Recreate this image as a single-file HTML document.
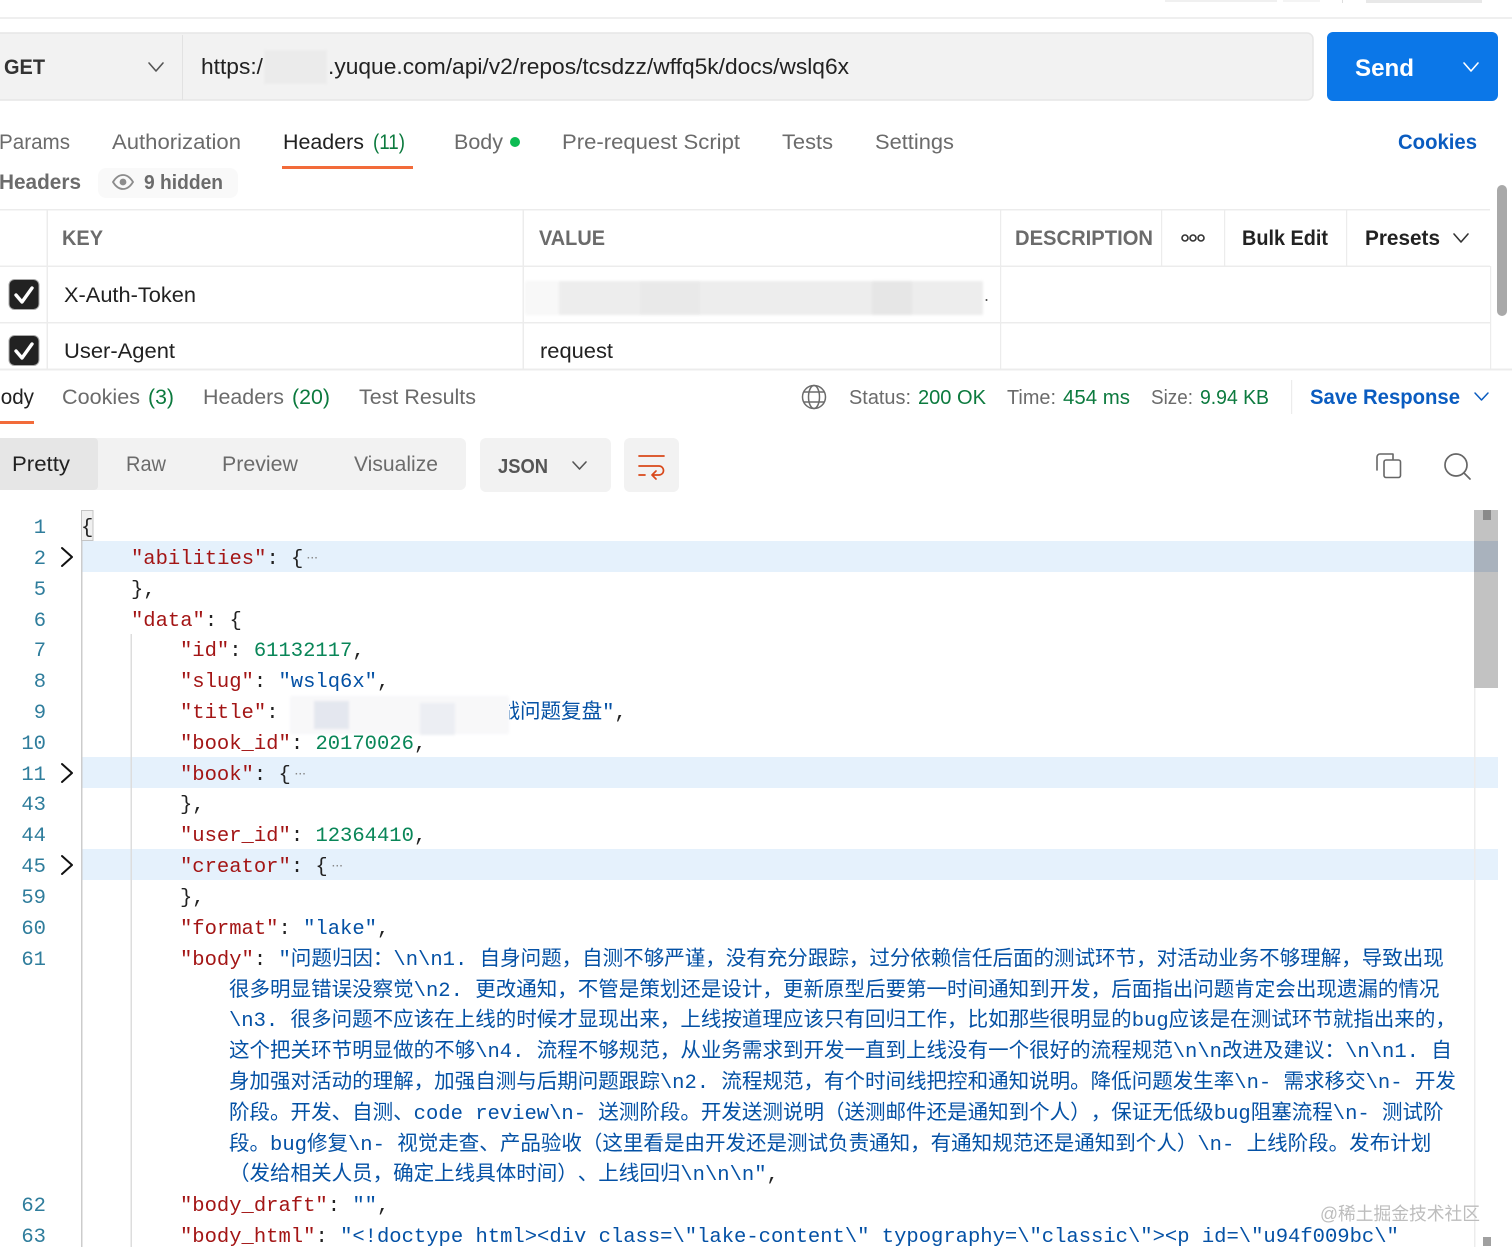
<!DOCTYPE html>
<html lang="zh"><head><meta charset="utf-8"><title>Postman</title>
<style>
html,body{margin:0;padding:0;background:#fff;width:1512px;height:1255px;overflow:hidden}
svg{display:block;position:absolute;left:0;top:0;filter:blur(.3px)}
.u{font-family:"Liberation Sans","Noto Sans CJK SC",sans-serif;font-size:21px;fill:#6b6b6b}
.b{font-weight:700}
.d{fill:#212121}
.g{fill:#0c7a3e}
.l{fill:#0a5cc0}
.m{font-family:"Liberation Mono","Noto Sans CJK SC",monospace;font-size:20.53px;fill:#222;white-space:pre;text-spacing-trim:space-all}
.n{fill:#2f7d9c;text-anchor:end}
.k{fill:#a31515}
.s{fill:#0451a5}
.v{fill:#098658}
.e{font-family:"Liberation Sans",sans-serif;font-size:10px;font-weight:700;fill:#888}
.i{fill:none;stroke:#555;stroke-width:1.6;stroke-linecap:round;stroke-linejoin:round}
</style></head><body>
<svg width="1512" height="1255" viewBox="0 0 1512 1255" xmlns="http://www.w3.org/2000/svg">
<defs><filter id="bl" x="-10%" y="-30%" width="120%" height="160%"><feGaussianBlur stdDeviation="1.2"/></filter></defs>
<rect width="1512" height="1255" fill="#fff"/>
<!-- top strip -->
<rect x="0" y="17" width="1512" height="2" fill="#efefef"/>
<rect x="1165" y="0" width="112" height="2" fill="#f0f0f0"/><rect x="1283" y="0" width="37" height="2" fill="#f4f4f4"/>
<rect x="1342" y="0" width="1" height="3" fill="#ddd"/><rect x="1366" y="0" width="116" height="3" fill="#e8e8e8"/>
<!-- url bar -->
<rect x="-8" y="33" width="1321" height="67" rx="6" fill="#f2f2f2" stroke="#e6e6e6" stroke-width="1.5"/>
<rect x="182" y="35" width="1" height="65" fill="#e2e2e2"/>
<text class="u b" x="4" y="74" font-size="21" style="fill:#333" textLength="41" lengthAdjust="spacingAndGlyphs">GET</text>
<path class="i" d="M149 63l7 8 7-8"/>
<text class="u" x="201" y="74" style="fill:#222;font-size:22px" textLength="62" lengthAdjust="spacingAndGlyphs">https:/</text>
<rect x="264" y="50" width="63" height="34" fill="#ebebeb" filter="url(#bl)"/>
<text class="u" x="328" y="74" style="fill:#222;font-size:22px" textLength="521" lengthAdjust="spacingAndGlyphs">.yuque.com/api/v2/repos/tcsdzz/wffq5k/docs/wslq6x</text>
<!-- send -->
<rect x="1327" y="32" width="171" height="69" rx="6" fill="#0b77e8"/>
<text class="u b" x="1355" y="76" style="fill:#fff;font-size:24px" textLength="59" lengthAdjust="spacingAndGlyphs">Send</text>
<path d="M1464 63l7 8 7-8" fill="none" stroke="#fff" stroke-width="1.6" stroke-linecap="round" stroke-linejoin="round"/>
<!-- request tabs -->
<text class="u" x="-1" y="149" textLength="71" lengthAdjust="spacingAndGlyphs">Params</text>
<text class="u" x="112" y="149" textLength="129" lengthAdjust="spacingAndGlyphs">Authorization</text>
<text class="u d" x="283" y="149" textLength="81" lengthAdjust="spacingAndGlyphs">Headers</text>
<text class="u g" x="373" y="149" textLength="32" lengthAdjust="spacingAndGlyphs">(11)</text>
<text class="u" x="454" y="149" textLength="49" lengthAdjust="spacingAndGlyphs">Body</text>
<circle cx="515" cy="142" r="5" fill="#0cbb52"/>
<text class="u" x="562" y="149" textLength="178" lengthAdjust="spacingAndGlyphs">Pre-request Script</text>
<text class="u" x="782" y="149" textLength="51" lengthAdjust="spacingAndGlyphs">Tests</text>
<text class="u" x="875" y="149" textLength="79" lengthAdjust="spacingAndGlyphs">Settings</text>
<text class="u b l" x="1398" y="149" textLength="79" lengthAdjust="spacingAndGlyphs">Cookies</text>
<rect x="282" y="166" width="131" height="3" fill="#f26b3a"/>
<!-- headers subheader -->
<text class="u b" x="-1" y="189" textLength="82" lengthAdjust="spacingAndGlyphs">Headers</text>
<rect x="98" y="168" width="140" height="30" rx="8" fill="#f9f9f9"/>
<path d="M113 182c3-5 6-7 10-7s7 2 10 7c-3 5-6 7-10 7s-7-2-10-7z" fill="none" stroke="#8c8c8c" stroke-width="1.8"/><circle cx="123" cy="182" r="3.4" fill="#8c8c8c"/>
<text class="u b" x="144" y="189" style="font-size:20px" textLength="79" lengthAdjust="spacingAndGlyphs">9 hidden</text>
<!-- table -->
<g fill="#ececec">
<rect x="0" y="209" width="1490" height="1.5"/><rect x="0" y="265.500" width="1490" height="1.500"/><rect x="0" y="322" width="1490" height="1.500"/>
<rect x="46.500" y="210" width="1.500" height="159"/><rect x="522.500" y="210" width="1.500" height="159"/><rect x="1000" y="210" width="1.200" height="159"/>
<rect x="1161" y="210" width="1.200" height="56"/><rect x="1224" y="210" width="1.200" height="56"/><rect x="1346" y="210" width="1.200" height="56"/><rect x="1490" y="266" width="1.200" height="103"/>
<rect x="0" y="368.500" width="1512" height="2"/>
</g>
<text class="u b" x="62" y="245" textLength="41" lengthAdjust="spacingAndGlyphs">KEY</text>
<text class="u b" x="539" y="245" textLength="66" lengthAdjust="spacingAndGlyphs">VALUE</text>
<text class="u b" x="1015" y="245" textLength="138" lengthAdjust="spacingAndGlyphs">DESCRIPTION</text>
<g fill="none" stroke="#333" stroke-width="1.600"><circle cx="1185" cy="238" r="3"/><circle cx="1193" cy="238" r="3"/><circle cx="1201" cy="238" r="3"/></g>
<text class="u b" x="1242" y="245" style="fill:#222" textLength="86" lengthAdjust="spacingAndGlyphs">Bulk Edit</text>
<text class="u b" x="1365" y="245" style="fill:#222" textLength="75" lengthAdjust="spacingAndGlyphs">Presets</text>
<path d="M1454 234l7 8 7-8" fill="none" stroke="#333" stroke-width="1.600" stroke-linecap="round" stroke-linejoin="round"/>
<rect x="9" y="279.500" width="30" height="30" rx="5.500" fill="#222" stroke="#aaa" stroke-width="1"/>
<path d="M16 295l6 7 10-14" fill="none" stroke="#fff" stroke-width="3.400" stroke-linecap="round" stroke-linejoin="round"/>
<rect x="9" y="335.500" width="30" height="30" rx="5.500" fill="#222" stroke="#aaa" stroke-width="1"/>
<path d="M16 351l6 7 10-14" fill="none" stroke="#fff" stroke-width="3.400" stroke-linecap="round" stroke-linejoin="round"/>
<text class="u d" x="64" y="302" textLength="132" lengthAdjust="spacingAndGlyphs">X-Auth-Token</text>
<text class="u d" x="64" y="358" textLength="111" lengthAdjust="spacingAndGlyphs">User-Agent</text>
<text class="u d" x="540" y="358" textLength="73" lengthAdjust="spacingAndGlyphs">request</text>
<g filter="url(#bl)">
<rect x="525" y="281" width="34" height="34" fill="#f8f8f8"/>
<rect x="559" y="281" width="424" height="34" fill="#ededed"/>
<rect x="640" y="281" width="60" height="34" fill="#e9e9e9"/>
<rect x="872" y="281" width="40" height="34" fill="#e6e6e6"/>
</g>
<circle cx="986.500" cy="300" r="1" fill="#444"/>
<rect x="1497" y="185" width="10" height="131" rx="5" fill="#a9a9a9"/>
<!-- response tabs -->
<text class="u d" x="-13" y="404" textLength="47" lengthAdjust="spacingAndGlyphs">Body</text>
<text class="u" x="62" y="404" textLength="78" lengthAdjust="spacingAndGlyphs">Cookies</text>
<text class="u g" x="148" y="404" textLength="26" lengthAdjust="spacingAndGlyphs">(3)</text>
<text class="u" x="203" y="404" textLength="81" lengthAdjust="spacingAndGlyphs">Headers</text>
<text class="u g" x="292" y="404" textLength="38" lengthAdjust="spacingAndGlyphs">(20)</text>
<text class="u" x="359" y="404" textLength="117" lengthAdjust="spacingAndGlyphs">Test Results</text>
<rect x="0" y="421" width="34" height="3" fill="#f26b3a"/>
<g fill="none" stroke="#6b6b6b" stroke-width="1.500"><circle cx="814" cy="397" r="11.500"/><ellipse cx="814" cy="397" rx="5.500" ry="11.500"/><path d="M803.500 392h21M803.500 402h21"/></g>
<text class="u" x="849" y="404" style="font-size:20px" textLength="62" lengthAdjust="spacingAndGlyphs">Status:</text>
<text class="u g" x="918" y="404" style="font-size:20px" textLength="68" lengthAdjust="spacingAndGlyphs">200 OK</text>
<text class="u" x="1007" y="404" style="font-size:20px" textLength="49" lengthAdjust="spacingAndGlyphs">Time:</text>
<text class="u g" x="1063" y="404" style="font-size:20px" textLength="67" lengthAdjust="spacingAndGlyphs">454 ms</text>
<text class="u" x="1151" y="404" style="font-size:20px" textLength="42" lengthAdjust="spacingAndGlyphs">Size:</text>
<text class="u g" x="1200" y="404" style="font-size:20px" textLength="69" lengthAdjust="spacingAndGlyphs">9.94 KB</text>
<rect x="1291" y="380" width="1.200" height="34" fill="#ececec"/>
<text class="u b l" x="1310" y="404" textLength="150" lengthAdjust="spacingAndGlyphs">Save Response</text>
<path d="M1475 393l6.500 7 6.500-7" fill="none" stroke="#0a5cc0" stroke-width="1.500" stroke-linecap="round" stroke-linejoin="round"/>
<!-- format bar -->
<rect x="-8" y="438" width="474" height="52" rx="6" fill="#f2f2f2"/>
<rect x="-8" y="438" width="106" height="52" rx="4" fill="#e6e6e6"/>
<text class="u d" x="12" y="471" textLength="58" lengthAdjust="spacingAndGlyphs">Pretty</text>
<text class="u" x="126" y="471" textLength="40" lengthAdjust="spacingAndGlyphs">Raw</text>
<text class="u" x="222" y="471" textLength="76" lengthAdjust="spacingAndGlyphs">Preview</text>
<text class="u" x="354" y="471" textLength="84" lengthAdjust="spacingAndGlyphs">Visualize</text>
<rect x="480" y="438" width="131" height="54" rx="6" fill="#f2f2f2"/>
<text class="u b" x="498" y="473" style="fill:#555;font-size:20px" textLength="50" lengthAdjust="spacingAndGlyphs">JSON</text>
<path class="i" d="M573 462l6.500 7 6.500-7"/>
<rect x="624" y="438" width="55" height="54" rx="6" fill="#f2f2f2"/>
<g fill="none" stroke="#d9481a" stroke-width="1.700" stroke-linecap="round" stroke-linejoin="round"><path d="M639 456h25M639 466h20a4.500 4.500 0 0 1 0 9h-7M656 471l-4 4 4 4M639 475h6"/></g>
<g fill="none" stroke="#666" stroke-width="1.600" stroke-linejoin="round" stroke-linecap="round"><rect x="1384" y="460" width="16.500" height="17.500" rx="2"/><path d="M1377 470v-13a3 3 0 0 1 3-3h13v5"/></g>
<g fill="none" stroke="#666" stroke-width="1.700" stroke-linecap="round"><circle cx="1456" cy="465" r="11"/><path d="M1464 473l6 6"/></g>
<!-- code area -->
<rect x="81" y="541" width="1417" height="31" fill="#e5f1fc"/>
<rect x="81" y="757" width="1417" height="31" fill="#e5f1fc"/>
<rect x="81" y="849" width="1417" height="31" fill="#e5f1fc"/>
<rect x="81" y="510" width="1.500" height="737" fill="#ccc"/>
<rect x="130.500" y="634" width="1.500" height="613" fill="#ddd"/>
<rect x="1474" y="510" width="24" height="178" fill="#c2c2c2"/>
<rect x="1474" y="541" width="24" height="31" fill="#a9b2bd"/>
<rect x="1474" y="688" width="1.500" height="559" fill="#ececec"/>
<rect x="1483" y="510" width="8" height="10" fill="#8a8a8a"/>
<rect x="1483" y="1237" width="8" height="9" fill="#a0a0a0"/>
<rect x="81.500" y="510.500" width="11.500" height="30" fill="#f0f0f0" stroke="#c4c4c4"/>
<g fill="none" stroke="#111" stroke-width="2" stroke-linecap="round" stroke-linejoin="round">
<path d="M62 548l10 9-10 9M62 764l10 9-10 9M62 856l10 9-10 9"/></g>
<g class="m n">
<text class="m n" x="46" y="533">1</text><text class="m n" x="46" y="564">2</text><text class="m n" x="46" y="595">5</text><text class="m n" x="46" y="626">6</text><text class="m n" x="46" y="656">7</text><text class="m n" x="46" y="687">8</text><text class="m n" x="46" y="718">9</text><text class="m n" x="46" y="749">10</text><text class="m n" x="46" y="780">11</text><text class="m n" x="46" y="810">43</text><text class="m n" x="46" y="841">44</text><text class="m n" x="46" y="872">45</text><text class="m n" x="46" y="903">59</text><text class="m n" x="46" y="934">60</text><text class="m n" x="46" y="965">61</text><text class="m n" x="46" y="1211">62</text><text class="m n" x="46" y="1242">63</text>
</g>
<g xml:space="preserve">
<text class="m" x="81" y="533">{</text>
<text class="m" x="131" y="564"><tspan class="k">"abilities"</tspan>: {</text>
<text class="e" x="307" y="561" textLength="11">···</text>
<text class="m" x="131" y="595">},</text>
<text class="m" x="131" y="626"><tspan class="k">"data"</tspan>: {</text>
<text class="m" x="180" y="656"><tspan class="k">"id"</tspan>: <tspan class="v">61132117</tspan>,</text>
<text class="m" x="180" y="687"><tspan class="k">"slug"</tspan>: <tspan class="s">"wslq6x"</tspan>,</text>
<text class="m" x="180" y="718"><tspan class="k">"title"</tspan>:</text>
<text class="m s" x="499.500" y="718">战问题复盘"<tspan fill="#222">,</tspan></text>
<rect x="290" y="695" width="219" height="40" fill="#fff"/>
<g filter="url(#bl)">
<rect x="290" y="696" width="219" height="38" fill="#f8f8f9"/>
<rect x="314" y="701" width="35" height="28" fill="#e4e7ef"/>
<rect x="420" y="703" width="35" height="32" fill="#eceef3"/>
</g>
<text class="m" x="180" y="749"><tspan class="k">"book_id"</tspan>: <tspan class="v">20170026</tspan>,</text>
<text class="m" x="180" y="780"><tspan class="k">"book"</tspan>: {</text>
<text class="e" x="295" y="777" textLength="11">···</text>
<text class="m" x="180" y="810">},</text>
<text class="m" x="180" y="841"><tspan class="k">"user_id"</tspan>: <tspan class="v">12364410</tspan>,</text>
<text class="m" x="180" y="872"><tspan class="k">"creator"</tspan>: {</text>
<text class="e" x="332" y="869" textLength="11">···</text>
<text class="m" x="180" y="903">},</text>
<text class="m" x="180" y="934"><tspan class="k">"format"</tspan>: <tspan class="s">"lake"</tspan>,</text>
<text class="m" x="180" y="965"><tspan class="k">"body"</tspan>: <tspan class="s">"问题归因：\n\n1. 自身问题，自测不够严谨，没有充分跟踪，过分依赖信任后面的测试环节，对活动业务不够理解，导致出现</tspan></text>
<text class="m s" x="229" y="996">很多明显错误没察觉\n2. 更改通知，不管是策划还是设计，更新原型后要第一时间通知到开发，后面指出问题肯定会出现遗漏的情况</text>
<text class="m s" x="229" y="1026">\n3. 很多问题不应该在上线的时候才显现出来，上线按道理应该只有回归工作，比如那些很明显的bug应该是在测试环节就指出来的，</text>
<text class="m s" x="229" y="1057">这个把关环节明显做的不够\n4. 流程不够规范，从业务需求到开发一直到上线没有一个很好的流程规范\n\n改进及建议：\n\n1. 自</text>
<text class="m s" x="229" y="1088">身加强对活动的理解，加强自测与后期问题跟踪\n2. 流程规范，有个时间线把控和通知说明。降低问题发生率\n- 需求移交\n- 开发</text>
<text class="m s" x="229" y="1119">阶段。开发、自测、code review\n- 送测阶段。开发送测说明（送测邮件还是通知到个人），保证无低级bug阻塞流程\n- 测试阶</text>
<text class="m s" x="229" y="1150">段。bug修复\n- 视觉走查、产品验收（这里看是由开发还是测试负责通知，有通知规范还是通知到个人）\n- 上线阶段。发布计划</text>
<text class="m s" x="229" y="1180">（发给相关人员，确定上线具体时间）、上线回归\n\n\n<tspan>"</tspan><tspan fill="#222">,</tspan></text>
<text class="m" x="180" y="1211"><tspan class="k">"body_draft"</tspan>: <tspan class="s">""</tspan>,</text>
<text class="m" x="180" y="1242"><tspan class="k">"body_html"</tspan>: <tspan class="s">"&lt;!doctype html&gt;&lt;div class=\"lake-content\" typography=\"classic\"&gt;&lt;p id=\"u94f009bc\"</tspan></text>
</g>
<text x="1320" y="1220" font-family="'Liberation Sans','Noto Sans CJK SC',sans-serif" font-size="18" fill="#bdbdbd" textLength="160" lengthAdjust="spacingAndGlyphs">@稀土掘金技术社区</text>
<rect x="0" y="1247" width="1512" height="8" fill="#fff"/>
</svg>
</body></html>
